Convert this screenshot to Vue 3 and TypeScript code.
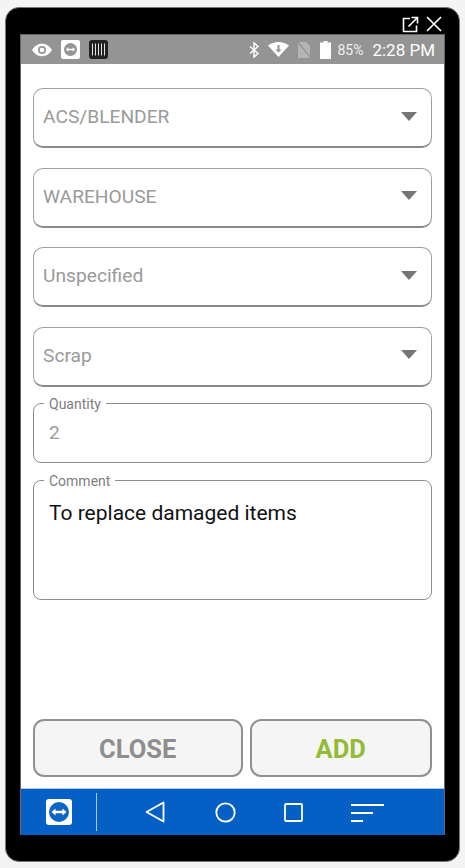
<template>
  <div class="page">
    <div class="device">
      <div class="window-bar">
        <!-- open external -->
        <svg class="win-icon" width="17" height="17" viewBox="0 0 17 17" fill="none" stroke="#fff" stroke-width="1.6">
          <path d="M8 2.500H1.500V15.500H14.500V9.500" />
          <path d="M6.500 10.500L15 2M9.500 1.500H15.500V7.500" />
        </svg>
        <!-- close -->
        <svg class="win-icon" width="16" height="16" viewBox="0 0 16 16" stroke="#fff" stroke-width="1.7">
          <path d="M1 1L15 15M15 1L1 15" />
        </svg>
      </div>

      <div class="screen">
        <!-- Status bar -->
        <div class="status-bar">
          <div class="status-left">
            <svg width="20" height="14" viewBox="0 0 20 14">
              <path d="M0 7C3 2.500 6 .8 10 .8S17 2.500 20 7C17 11.500 14 13.200 10 13.200S3 11.500 0 7Z" fill="#fff" />
              <circle cx="10" cy="7" r="4" fill="#949494" />
              <circle cx="10" cy="7" r="2.300" fill="#fff" />
            </svg>
            <svg width="19" height="19" viewBox="0 0 19 19">
              <rect width="19" height="19" rx="2" fill="#fff" />
              <circle cx="9.500" cy="9.500" r="6.500" fill="#949494" />
              <path d="M4.800 9.500L7.300 7.300V8.700H11.700V7.300L14.200 9.500L11.700 11.700V10.300H7.300V11.700Z" fill="#fff" />
            </svg>
            <svg width="19" height="19" viewBox="0 0 19 19">
              <rect width="19" height="19" rx="3" fill="#222" />
              <path d="M3.500 3.500V15.500M6.500 3.500V15.500M9.500 3.500V15.500M12.500 3.500V15.500M15.500 3.500V15.500" stroke="#e4e4e4" stroke-width="1" />
            </svg>
          </div>
          <div class="status-right">
            <svg width="10" height="16" viewBox="0 0 10 16" fill="none" stroke="#fff" stroke-width="1.400">
              <path d="M1 4.500L9 11.500L5 15V1L9 4.500L1 11.500" />
            </svg>
            <svg width="21" height="15" viewBox="0 0 21 15">
              <path d="M0 3.500C3 1.200 6.500 0 10.500 0S18 1.200 21 3.500L10.500 15Z" fill="#fff" />
              <path d="M9.500 3H11.500V7.500H13.500L10.500 10.500L7.500 7.500H9.500Z" fill="#949494" />
            </svg>
            <svg class="sim" width="14" height="18" viewBox="0 0 14 18">
              <path d="M1 1H9L13 5V17H1Z" fill="#b4b4b4" />
              <path d="M0 0L14 17" stroke="#949494" stroke-width="1.200" />
            </svg>
            <svg class="battery" width="11" height="18" viewBox="0 0 11 18">
              <path d="M3.500 0H7.500V1.500H11V18H0V1.500H3.500Z" fill="#fff" />
            </svg>
            <span class="battery-text">85%</span>
            <span class="clock">2:28 PM</span>
          </div>
        </div>

        <!-- Form -->
        <div class="form">
          <div v-for="item in selects" :key="item" class="select-box">
            <span class="select-text">{{ item }}</span>
            <i class="arrow"></i>
          </div>

          <fieldset class="field qty">
            <legend>Quantity</legend>
            <div class="qty-value">2</div>
          </fieldset>

          <fieldset class="field comment">
            <legend>Comment</legend>
            <div class="comment-value">To replace damaged items</div>
          </fieldset>

          <div class="actions">
            <button class="btn btn-close">CLOSE</button>
            <button class="btn btn-add">ADD</button>
          </div>
        </div>

        <!-- Android nav bar -->
        <div class="nav-bar">
          <div class="nav-logo">
            <svg width="26" height="26" viewBox="0 0 26 26">
              <rect width="26" height="26" rx="3" fill="#fff" />
              <circle cx="13" cy="13" r="10" fill="#0e64c4" />
              <path d="M5.500 13L9.500 9.500V11.800H16.500V9.500L20.500 13L16.500 16.500V14.200H9.500V16.500Z" fill="#fff" />
            </svg>
          </div>
          <div class="nav-divider"></div>
          <div class="nav-icons">
            <svg width="20" height="22" viewBox="0 0 20 22" fill="none" stroke="#fff" stroke-width="1.800" stroke-linejoin="round">
              <path d="M1.500 11L18.500 1.500V20.500Z" />
            </svg>
            <svg class="nav-circle" width="21" height="21" viewBox="0 0 21 21" fill="none" stroke="#fff" stroke-width="1.800">
              <circle cx="10.500" cy="10.500" r="9.200" />
            </svg>
            <svg width="19" height="19" viewBox="0 0 19 19" fill="none" stroke="#fff" stroke-width="1.800">
              <rect x="1" y="1" width="17" height="17" rx="1" />
            </svg>
            <svg width="33" height="19" viewBox="0 0 33 19" stroke="#fff" stroke-width="2">
              <path d="M0 2H33M0 10H22M0 18H12" />
            </svg>
          </div>
        </div>
      </div>
    </div>
  </div>
</template>

<script setup lang="ts">
// Dropdown values shown in the form
const selects: string[] = ["ACS/BLENDER", "WAREHOUSE", "Unspecified", "Scrap"];
</script>

<style>
html, body {
  margin: 0;
  background: #f4f4f4;
}
</style>

<style scoped>
.page {
  width: 465px;
  height: 868px;
  padding: 7px 5px 6px 5px;
  box-sizing: border-box;
  font-family: Roboto, "Liberation Sans", sans-serif;
}

.device {
  height: 100%;
  box-sizing: border-box;
  background: #000;
  border: 1px solid #777;
  border-radius: 14px;
  padding: 0 14px 26px 14px;
  display: flex;
  flex-direction: column;
}

.window-bar {
  height: 26px;
  flex: none;
  display: flex;
  justify-content: flex-end;
  align-items: flex-start;
  gap: 7px;
  padding: 8px 3px 0 0;
  box-sizing: border-box;
}

.screen {
  flex: 1;
  background: #fff;
  display: flex;
  flex-direction: column;
  min-height: 0;
  border: 1px solid #666;
  border-bottom: none;
}

.status-bar {
  height: 29px;
  flex: none;
  background: #949494;
  display: flex;
  justify-content: space-between;
  align-items: center;
  padding: 0 9px 0 11px;
  box-sizing: border-box;
}

.status-left,
.status-right {
  display: flex;
  align-items: center;
}

.status-left {
  gap: 9px;
}

.status-right {
  gap: 9px;
}

.sim {
  margin-left: -1px;
}

.battery-text {
  color: #f0f0f0;
  font-size: 14px;
  margin-left: -3px;
}

.clock {
  color: #fff;
  font-size: 17px;
}

.form {
  flex: 1;
  padding: 24px 12px 11px 12px;
  display: flex;
  flex-direction: column;
  min-height: 0;
}

.select-box {
  height: 60px;
  flex: none;
  box-sizing: border-box;
  border: 1px solid #a0a0a0;
  border-bottom: 2px solid #8a8a8a;
  border-radius: 10px;
  margin-bottom: 19.500px;
  padding: 0 14px 0 9px;
  display: flex;
  justify-content: space-between;
  align-items: center;
  color: #9a9a9a;
  font-size: 19.200px;
}

.select-text {
  margin-bottom: 2px;
}

.arrow {
  width: 0;
  height: 0;
  border-left: 8.500px solid transparent;
  border-right: 8.500px solid transparent;
  border-top: 9px solid #757575;
  margin-bottom: 3px;
}

.field {
  margin: 0;
  padding: 0 15px;
  border: 1px solid #8e8e8e;
  border-radius: 8px;
  box-sizing: border-box;
  flex: none;
  min-width: 0;
}

.field legend {
  padding: 2px 5px 0 5px;
  margin-left: -5px;
  font-size: 14px;
  line-height: 15px;
  color: #7e7e7e;
}

.qty {
  height: 68px;
  margin-top: -11px;
}

.qty-value {
  color: #9a9a9a;
  font-size: 19.200px;
  line-height: 24px;
  margin-top: 9px;
}

.comment {
  height: 128px;
  margin-top: 9px;
}

.comment-value {
  color: #111;
  font-size: 21px;
  line-height: 26px;
  margin-top: 11px;
}

.actions {
  margin-top: auto;
  display: flex;
  gap: 7px;
}

.btn {
  height: 58px;
  background: #f5f5f5;
  border: 2px solid #909090;
  border-radius: 11px;
  font-family: Roboto, "Liberation Sans", sans-serif;
  font-size: 25.500px;
  font-weight: 700;
  padding: 1px 0 0 0;
}

.btn-close {
  width: 209.500px;
  color: #8e8e8e;
}

.btn-add {
  width: 182.500px;
  color: #93bb35;
}

.nav-bar {
  height: 47px;
  flex: none;
  background: #0460c4;
  border-top: 1px solid #a9c8ea;
  box-sizing: border-box;
  display: flex;
  align-items: center;
}

.nav-logo {
  width: 75px;
  display: flex;
  justify-content: center;
}

.nav-divider {
  width: 1px;
  height: 38px;
  background: #a9c8ea;
}

.nav-icons {
  flex: 1;
  display: flex;
  align-items: center;
  gap: 48px;
  padding-left: 48px;
}

.nav-circle {
  margin-left: 2px;
}
</style>
